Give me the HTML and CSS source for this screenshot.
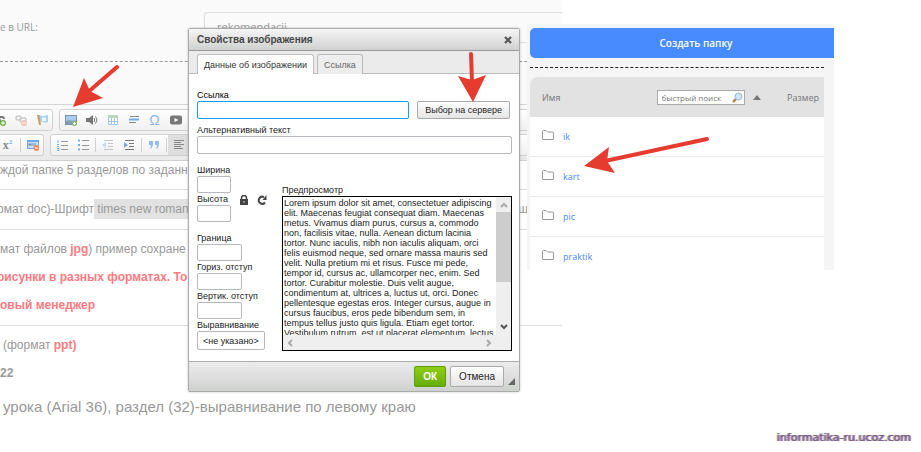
FILE: index.html
```html
<!DOCTYPE html>
<html lang="ru">
<head>
<meta charset="utf-8">
<title>Свойства изображения</title>
<link rel="stylesheet" href="styles.css">
</head>
<body>

<!-- Page with the text editor -->
<div class="editor">
    <form class="url-row">
        <label for="pageUrl">е в URL:</label>
        <input type="text" id="pageUrl" value="rekomendacji">
    </form>

    <div class="toolbar">
        <div class="tool-row">
            <div class="group group-cut">
                <button type="button" aria-label="Вставить ссылку"><svg viewBox="0 0 12 12"><path d="M1 5h3a2 2 0 0 1 0 4H1M5 3h3a2 2 0 0 1 2 2" fill="none" stroke="#777" stroke-width="2"/><circle cx="9" cy="9" r="3" fill="#6fb04c"/><path d="M7 9h4M9 7v4" stroke="#fff"/></svg></button>
                <button type="button" class="faded" aria-label="Убрать ссылку"><svg viewBox="0 0 12 12"><rect x="1" y="2" width="5" height="4" rx="2" fill="none" stroke="#888" stroke-width="1.5"/><rect x="5" y="4" width="6" height="4" rx="2" fill="none" stroke="#888" stroke-width="1.5"/><circle cx="9" cy="9" r="3" fill="#ef7b50"/><path d="M7 9h4" stroke="#fff"/></svg></button>
                <button type="button" aria-label="Якорь"><svg viewBox="0 0 12 12"><path d="M3 1.500c2-1 3 1 5 .5l4-1v7c-3 2-4-1-8 0z" fill="#a5d4f8"/><path d="M6 4l2-1 2 1v3H6z" fill="#eef8ff"/><path d="M1 1h2.500L5 11H3z" fill="#d99b65"/></svg></button>
            </div>
            <div class="group group-rest">
                <button type="button" aria-label="Изображение"><svg viewBox="0 0 12 12"><rect x=".5" y="1.500" width="11" height="9" fill="#a9cdf2" stroke="#7b94b0"/><path d="M1 7c3-2 6 1 10-1v4H1z" fill="#7f9fb8"/><circle cx="9.500" cy="9.500" r="2.500" fill="#85bb67"/><path d="M8 9.500h3M9.500 8v3" stroke="#fff"/></svg></button>
                <button type="button" aria-label="Звук"><svg viewBox="0 0 12 12"><path d="M0 4h3l4-3v10L3 8H0z" fill="#777"/><path d="M8 4q1.500 2 0 4M9.500 2.500q3 3.500 0 7" fill="none" stroke="#777"/></svg></button>
                <button type="button" aria-label="Таблица"><svg viewBox="0 0 12 12"><path d="M1.500 1.500h9v9h-9zM1.500 7.500h9M4.500 4v6.500M7.500 4v6.500" fill="#fff" stroke="#9fc3ec"/><path d="M1 1h10v3H1z" fill="#b9d8b8"/></svg></button>
                <button type="button" aria-label="Горизонтальная линия"><svg viewBox="0 0 12 12"><path d="M2 2.500h9M1 8.500h7" stroke="#888"/><path d="M1 5.500h10" stroke="#75aae9" stroke-width="2"/></svg></button>
                <button type="button" class="omega" aria-label="Специальный символ">Ω</button>
                <button type="button" aria-label="Видео"><svg viewBox="0 0 12 12"><rect y="1.500" width="12" height="9" rx="2" fill="#777"/><path d="M4.500 4v4l4-2z" fill="#fff"/></svg></button>
            </div>
        </div>
        <div class="tool-row">
            <div class="group group-index">
                <button type="button" class="index" aria-label="Надстрочный индекс">x<sup>2</sup></button>
                <span class="sep"></span>
                <button type="button" aria-label="Источник"><svg viewBox="0 0 12 12"><rect x=".5" y="1.500" width="11" height="8" fill="#c8e0fb" stroke="#6fa6e7"/><path d="M0 1h12v2H0z" fill="#6fa6e7"/><path d="M2 4v3M4 4v3M2 5.500h2M6 4v3M8 4v3" stroke="#6f93bd"/><circle cx="9.500" cy="9" r="3" fill="#ef8a60"/><path d="M8 9h3" stroke="#fff"/></svg></button>
            </div>
            <div class="group group-rest">
                <button type="button" aria-label="Нумерованный список"><svg viewBox="0 0 12 12"><path d="M5 2.500h7M5 6.500h7M5 10.500h7" stroke="#999"/><path d="M2 1v3M1 5.500h2M1 7.500h2M1 9.500h2v2H1" stroke="#75aae9" fill="none"/></svg></button>
                <button type="button" aria-label="Маркированный список"><svg viewBox="0 0 12 12"><path d="M5 1.500h7M5 6.500h7M5 10.500h7" stroke="#999"/><path d="M1 1.500h2M1 6h2M1 10.500h2" stroke="#75aae9" stroke-width="2"/></svg></button>
                <span class="sep"></span>
                <button type="button" class="faded" aria-label="Уменьшить отступ"><svg viewBox="0 0 12 12"><path d="M2 1.500h9M6 4.500h5M6 7.500h5M2 10.500h9" stroke="#777"/><path d="M4 3v6L0 6z" fill="#75aae9"/></svg></button>
                <button type="button" aria-label="Увеличить отступ"><svg viewBox="0 0 12 12"><path d="M2 1.500h9M6 4.500h5M6 7.500h5M2 10.500h9" stroke="#777"/><path d="M1 3v6l4-3z" fill="#75aae9"/></svg></button>
                <span class="sep"></span>
                <button type="button" aria-label="Цитата"><svg viewBox="0 0 12 12"><path d="M1 2h4v3q0 4-3 5 1-2 1-4H1zM7 2h4v3q0 4-3 5 1-2 1-4H7z" fill="#8fbdf2"/></svg></button>
                <span class="sep"></span>
                <button type="button" class="active" aria-label="По левому краю"><svg viewBox="0 0 12 12"><path d="M1 1.500h10M1 3.500h7M1 5.500h10M1 7.500h7M1 9.500h9" stroke="#888"/></svg></button>
            </div>
        </div>
    </div>

    <div class="document">
        <p>ждой папке 5 разделов по заданн</p>
        <hr>
        <p class="cut marked">рмат doc)-Шрифт<mark> times new roman</mark>ш</p>
        <hr>
        <p>мат файлов <b class="red">jpg</b>) пример сохране</p>
        <p class="cut red"><b>рисунки в разных форматах. То</b></p>
        <p class="red"><b>овый менеджер</b></p>
        <hr>
        <p class="inset">(формат <b class="red">ppt)</b></p>
        <p><b>22</b></p>
        <p class="inset large">урока (Arial 36), раздел (32)-выравнивание по левому краю</p>
    </div>
</div>

<!-- Image properties -->
<form class="dialog">
    <div class="dialog-title">
        <span>Свойства изображения</span>
        <button type="button" class="close" aria-label="Закрыть"><svg viewBox="0 0 8 8"><path d="M1 1l6 6M7 1L1 7" stroke="#555" stroke-width="2.200"/></svg></button>
    </div>
    <div class="tabs">
        <button type="button" class="tab current">Данные об изображении</button>
        <button type="button" class="tab">Ссылка</button>
    </div>

    <div class="dialog-body">
        <div class="link-row">
            <div class="field">
                <label for="imgLink" class="strong">Ссылка</label>
                <input type="text" id="imgLink" class="focused">
            </div>
            <button type="button" class="btn">Выбор на сервере</button>
        </div>
        <div class="field alt">
            <label for="imgAlt">Альтернативный текст</label>
            <input type="text" id="imgAlt">
        </div>

        <div class="columns">
            <div class="settings">
                <div class="size">
                    <div class="short">
                        <div class="field">
                            <label for="imgWidth">Ширина</label>
                            <input type="text" id="imgWidth">
                        </div>
                        <div class="field">
                            <label for="imgHeight">Высота</label>
                            <input type="text" id="imgHeight">
                        </div>
                    </div>
                    <button type="button" class="mini" aria-label="Сохранять пропорции"><svg viewBox="0 0 10 10"><path d="M1 4h8v6H1z" fill="#444"/><path d="M2.500 5V3a2.500 2.500 0 0 1 5 0v2" fill="none" stroke="#444" stroke-width="1.500"/><path d="M5 6v2" stroke="#ccc"/></svg></button>
                    <button type="button" class="mini" aria-label="Вернуть обычные размеры"><svg viewBox="0 0 10 10"><path d="M8 7.500A3.500 3.500 0 1 1 7 2.200" fill="none" stroke="#444" stroke-width="2"/><path d="M5.500 5h4V0z" fill="#444"/></svg></button>
                </div>
                <div class="field medium">
                    <label for="imgBorder">Граница</label>
                    <input type="text" id="imgBorder">
                </div>
                <div class="field medium">
                    <label for="imgHspace">Гориз. отступ</label>
                    <input type="text" id="imgHspace">
                </div>
                <div class="field medium">
                    <label for="imgVspace">Вертик. отступ</label>
                    <input type="text" id="imgVspace">
                </div>
                <div class="field">
                    <label for="imgAlign">Выравнивание</label>
                    <select id="imgAlign"><option>&lt;не указано&gt;</option></select>
                </div>
            </div>

            <div class="preview">
                <span>Предпросмотр</span>
                <div class="preview-box">
                    <div class="preview-text">Lorem ipsum dolor sit amet, consectetuer adipiscing<br>elit. Maecenas feugiat consequat diam. Maecenas<br>metus. Vivamus diam purus, cursus a, commodo<br>non, facilisis vitae, nulla. Aenean dictum lacinia<br>tortor. Nunc iaculis, nibh non iaculis aliquam, orci<br>felis euismod neque, sed ornare massa mauris sed<br>velit. Nulla pretium mi et risus. Fusce mi pede,<br>tempor id, cursus ac, ullamcorper nec, enim. Sed<br>tortor. Curabitur molestie. Duis velit augue,<br>condimentum at, ultrices a, luctus ut, orci. Donec<br>pellentesque egestas eros. Integer cursus, augue in<br>cursus faucibus, eros pede bibendum sem, in<br>tempus tellus justo quis ligula. Etiam eget tortor.<br>Vestibulum rutrum, est ut placerat elementum, lectus</div>
                    <div class="scroll-y">
                        <svg viewBox="0 0 8 6"><path d="M1 5l3-3 3 3" fill="none" stroke="#aaa" stroke-width="2"/></svg>
                        <div class="thumb"></div>
                        <svg viewBox="0 0 8 6"><path d="M1 1l3 3 3-3" fill="none" stroke="#555" stroke-width="2"/></svg>
                    </div>
                    <div class="scroll-x">
                        <svg viewBox="0 0 6 8"><path d="M5 1L2 4l3 3" fill="none" stroke="#aaa" stroke-width="2"/></svg>
                        <svg viewBox="0 0 6 8"><path d="M1 1l3 3-3 3" fill="none" stroke="#aaa" stroke-width="2"/></svg>
                    </div>
                </div>
            </div>
        </div>
    </div>

    <div class="dialog-footer">
        <button type="submit" class="btn ok">ОК</button>
        <button type="button" class="btn">Отмена</button>
        <svg class="grip" viewBox="0 0 7 7"><path d="M7 0v7H0z" fill="#666"/></svg>
    </div>
</form>

<!-- File manager -->
<div class="files">
    <button type="button" class="create">Создать папку</button>
    <table>
        <thead>
            <tr>
                <th>Имя</th>
                <th>
                    <div class="search-cell">
                        <div class="search">
                            <input type="text" placeholder="быстрый поиск" aria-label="быстрый поиск">
                            <svg viewBox="0 0 11 11"><path d="M1 10l3-3" stroke="#b98a58" stroke-width="2.500"/><circle cx="6.500" cy="4.500" r="3.500" fill="#cfe6fa" stroke="#94b8db"/></svg>
                        </div>
                        <svg class="sort" viewBox="0 0 8 5"><path d="M4 0l4 5H0z" fill="#777"/></svg>
                    </div>
                </th>
                <th class="file-size">Размер</th>
            </tr>
        </thead>
        <tbody>
            <tr><td colspan="3"><a href="#"><svg viewBox="0 0 12 10"><path d="M.5 9V1.500q0-1 1-1h2.500l1.500 1.500h5q1 0 1 1V9q0 .5-.5.5H1Q.5 9.500.5 9z"/></svg>ik</a></td></tr>
            <tr><td colspan="3"><a href="#"><svg viewBox="0 0 12 10"><path d="M.5 9V1.500q0-1 1-1h2.500l1.500 1.500h5q1 0 1 1V9q0 .5-.5.5H1Q.5 9.500.5 9z"/></svg>kart</a></td></tr>
            <tr><td colspan="3"><a href="#"><svg viewBox="0 0 12 10"><path d="M.5 9V1.500q0-1 1-1h2.500l1.500 1.500h5q1 0 1 1V9q0 .5-.5.5H1Q.5 9.500.5 9z"/></svg>pic</a></td></tr>
            <tr><td colspan="3"><a href="#"><svg viewBox="0 0 12 10"><path d="M.5 9V1.500q0-1 1-1h2.500l1.500 1.500h5q1 0 1 1V9q0 .5-.5.5H1Q.5 9.500.5 9z"/></svg>praktik</a></td></tr>
        </tbody>
    </table>
</div>

<!-- Red pointers -->
<svg class="arrows" width="720" height="190" viewBox="0 0 720 190">
    <path class="shaft" d="M117 67L87 93M471 54l1 28M707 139l-102 22"/>
    <path class="head" d="M73 107l11-29 6 13 13 7zM473 102l-15-26 14 4 14-5zM584 166l25-19-2 14 8 12z"/>
</svg>

<div class="watermark">informatika-ru.ucoz.com</div>

</body>
</html>
```
FILE: styles.css
```css
* {
    box-sizing: border-box;
}

body {
    margin: 0;
    min-height: 100vh;
    position: relative;
    overflow: hidden;
    background: #fff;
    font-family: "Liberation Sans", Arial, sans-serif;
    font-size: 9px;
    color: #222;
}

button, input, select {
    font: inherit;
    color: inherit;
    margin: 0;
    padding: 0;
}

svg {
    display: block;
}

/* Editor page */
.editor {
    width: 61%;
    overflow: hidden;
    color: #999;
}

.url-row {
    display: flex;
    align-items: center;
    height: 62px;
    padding: 12px 0 18px;
    background: #fafafa;
    border-bottom: 1px dashed #999;
    font-family: "Open Sans", sans-serif;
    font-size: 10px;
}

.url-row label {
    width: 204px;
    padding-bottom: 2px;
}

.url-row input {
    flex: 1;
    height: 31px;
    padding: 0 12px 3px;
    border: 1px solid #ddd;
    border-right: 0;
    border-radius: 4px 0 0 4px;
    background: #fafafa;
    font-size: 11px;
}

.toolbar {
    margin-top: 42px;
    padding: 4px 0;
    border-top: 1px solid #d5d5d5;
    border-bottom: 1px solid #d0d0d0;
    background: linear-gradient(#fafafa, #e9e9e9);
    box-shadow: 0 -42px #fafafa;
}

.tool-row {
    display: flex;
    gap: 6px;
}

.tool-row + .tool-row {
    margin-top: 3px;
}

.group {
    display: flex;
    align-items: center;
    height: 22px;
    border: 1px solid #d0d0d0;
    border-radius: 3px;
    background: linear-gradient(#fff, #f0f0f0);
}

.group-cut {
    margin-left: -12px;
}

.group-index {
    margin-left: -4px;
}

.group-rest {
    flex: 1;
}

.group button {
    display: flex;
    align-items: center;
    justify-content: center;
    width: 21px;
    height: 20px;
    border: 0;
    background: none;
}

.group svg {
    width: 12px;
    height: 12px;
}

.group .faded {
    opacity: 0.4;
}

.group .active {
    background: #dedede;
}

.group .omega {
    color: #8db8ee;
    font-size: 14px;
}

.group .index {
    font: bold 12px "Liberation Serif", serif;
    color: #888;
}

.index sup {
    padding-bottom: 6px;
    color: #75aae9;
    font-size: 7px;
    line-height: 7px;
}

.sep {
    width: 1px;
    height: 14px;
    margin: 0 1px 0 2px;
    background: #d0d0d0;
}

.document {
    padding-top: 1px;
    background: #fff;
    font-size: 12px;
    line-height: 16px;
    white-space: nowrap;
}

.document p {
    margin: 0 0 12px;
}

.document p:first-child {
    margin-bottom: 0;
}

.document hr {
    margin: 11px 0;
    border: 0;
    border-top: 1px solid #ddd;
}

.document .cut {
    margin-left: -3px;
}

.document .marked {
    display: flex;
    padding-right: 34px;
}

.document mark {
    flex: 1;
    margin: -2px 0;
    padding: 2px 0;
    background: #e2e2e2;
    color: inherit;
    white-space: pre;
}

.document .red {
    color: #ff7a80;
}

.document .inset {
    padding-left: 3px;
}

.document .large {
    font-size: 15px;
    line-height: 28px;
}

/* Dialog */
.dialog {
    position: absolute;
    top: 28px;
    left: 188px;
    width: 332px;
    border: 1px solid #aaa;
    border-radius: 2px;
    background: #fff;
    box-shadow: 0 0 3px rgba(0, 0, 0, 0.2);
}

.dialog-title {
    display: flex;
    justify-content: space-between;
    align-items: center;
    height: 22px;
    padding: 0 7px 0 8px;
    border-bottom: 1px solid #999;
    background: linear-gradient(#f5f5f5, #cfd1cf);
    color: #474747;
    font-size: 10px;
    font-weight: bold;
}

.close {
    border: 0;
    background: none;
}

.close svg {
    width: 8px;
    height: 8px;
}

.tabs {
    display: flex;
    gap: 3px;
    height: 23px;
    padding: 3px 8px 0;
    border-bottom: 1px solid #bbb;
    background: #ebebeb;
}

.tab {
    height: 20px;
    padding: 0 6px;
    border: 1px solid #bbb;
    border-bottom: 0;
    border-radius: 3px 3px 0 0;
    background: #ededed;
    color: #666;
}

.tab.current {
    background: #fff;
    color: #333;
}

.dialog-body {
    padding: 15px 7px 10px 8px;
}

.field label, .preview span {
    display: block;
    line-height: 12px;
}

.field label.strong {
    color: #000;
}

.field input, .field select {
    display: block;
    width: 100%;
    height: 18px;
    border: 1px solid #b5b8bc;
    border-radius: 2px;
    background: #fff;
}

.field input.focused {
    border-color: #139ff7;
    outline: 0;
}

.link-row {
    display: flex;
    align-items: flex-end;
    gap: 8px;
    padding-right: 2px;
}

.link-row .field {
    flex: 1;
}

.btn {
    height: 18px;
    padding: 0 7px;
    border: 1px solid #aaa;
    border-radius: 2px;
    background: linear-gradient(#fff, #e4e4e4);
}

.alt {
    margin-top: 5px;
}

.columns {
    display: flex;
    gap: 13px;
    margin-top: 10px;
}

.settings {
    width: 72px;
}

.settings .field input {
    height: 17px;
}

.size {
    display: flex;
    align-items: flex-end;
    gap: 8px;
    margin-bottom: 10px;
}

.mini {
    flex: none;
    width: 10px;
    margin-bottom: 17px;
    border: 0;
    background: none;
}

.short {
    width: 34px;
}

.short label {
    white-space: nowrap;
}

.medium input {
    max-width: 45px;
}

.field select {
    width: 68px;
    height: 19px;
    padding-left: 5px;
    appearance: none;
}

.preview {
    flex: 1;
    padding-top: 20px;
}

.preview-box {
    display: grid;
    grid-template-columns: 1fr 15px;
    grid-template-rows: 138px 15px;
    border: 1px solid #000;
    background: #efefef;
}

.preview-text {
    overflow: hidden;
    padding: 1px 0 0 1px;
    background: #fff;
    line-height: 10px;
    white-space: nowrap;
}

.scroll-y {
    display: flex;
    flex-direction: column;
    align-items: center;
    padding: 5px 0;
}

.scroll-y svg {
    width: 8px;
    height: 6px;
}

.thumb {
    width: 15px;
    height: 70px;
    margin: 4px 0 auto;
    background: #cdcdcd;
}

.scroll-x {
    display: flex;
    justify-content: space-between;
    align-items: center;
    padding: 0 4px;
}

.scroll-x svg {
    width: 6px;
    height: 8px;
}

.dialog-footer {
    display: flex;
    align-items: center;
    justify-content: flex-end;
    gap: 4px;
    height: 30px;
    padding-right: 4px;
    border-top: 1px solid #aaa;
    background: linear-gradient(#ebebeb, #cfd1cf);
}

.dialog-footer .btn {
    height: 21px;
    padding: 0 8px;
    font-size: 10px;
}

.dialog-footer .ok {
    border-color: #5a9c0a;
    background: linear-gradient(#8fce14, #66ad0b);
    color: #fff;
    font-weight: bold;
}

.grip {
    width: 7px;
    height: 7px;
    align-self: flex-end;
    margin-bottom: 6px;
}

/* File manager */
.files {
    position: absolute;
    top: 24px;
    left: 527px;
    width: 307px;
    height: 246px;
    overflow: hidden;
    padding: 4px 0 0 3px;
    background: #f5f5f5;
    font-family: "Open Sans", sans-serif;
    color: #777;
}

.create {
    display: block;
    width: 100%;
    height: 30px;
    padding-left: 28px;
    border: 0;
    border-radius: 5px 0 0 5px;
    background: #488bff;
    color: #fff;
    font-size: 10px;
    font-weight: 600;
}

.files::after {
    content: "";
    position: absolute;
    top: 43px;
    left: 3px;
    right: 10px;
    border-top: 1px dashed #222;
}

.files table {
    width: 294px;
    margin-top: 19px;
    border-spacing: 0;
}

.files th {
    height: 40px;
    padding: 0;
    background: #e2e2e2;
    font-weight: normal;
    text-align: left;
}

.files th:first-child {
    padding-left: 12px;
    border-radius: 8px 0 0 0;
}

.files .file-size {
    padding-right: 5px;
    text-align: right;
}

.search-cell {
    display: flex;
    align-items: center;
    justify-content: flex-end;
    gap: 8px;
}

.search {
    display: flex;
    align-items: center;
    width: 88px;
    height: 15px;
    padding: 0 1px 0 4px;
    border: 1px solid #aaa;
    background: #fff;
}

.search input {
    flex: 1;
    min-width: 0;
    border: 0;
    background: none;
    font-size: 8px;
}

.search input::placeholder {
    color: #777;
}

.search svg {
    width: 11px;
    height: 11px;
}

.sort {
    width: 8px;
    height: 5px;
}

.files td {
    height: 40px;
    padding: 0 12px;
    border-bottom: 1px solid #eaeaea;
    background: #fff;
}

.files a {
    display: flex;
    align-items: center;
    gap: 9px;
    color: #488bff;
    text-decoration: none;
}

.files a svg {
    width: 12px;
    height: 10px;
    margin-bottom: 4px;
    fill: none;
    stroke: #999;
}

.arrows {
    position: absolute;
    top: 0;
    left: 0;
    pointer-events: none;
}

.shaft {
    stroke: #e63c30;
    stroke-width: 4;
    stroke-linecap: round;
}

.head {
    fill: #e63c30;
}

.watermark {
    position: absolute;
    right: 10px;
    bottom: 8px;
    font-family: "DejaVu Sans", sans-serif;
    font-size: 11px;
    color: #666;
    text-shadow: 1px 0 #d070e0, -1px 0 #999;
}
```
